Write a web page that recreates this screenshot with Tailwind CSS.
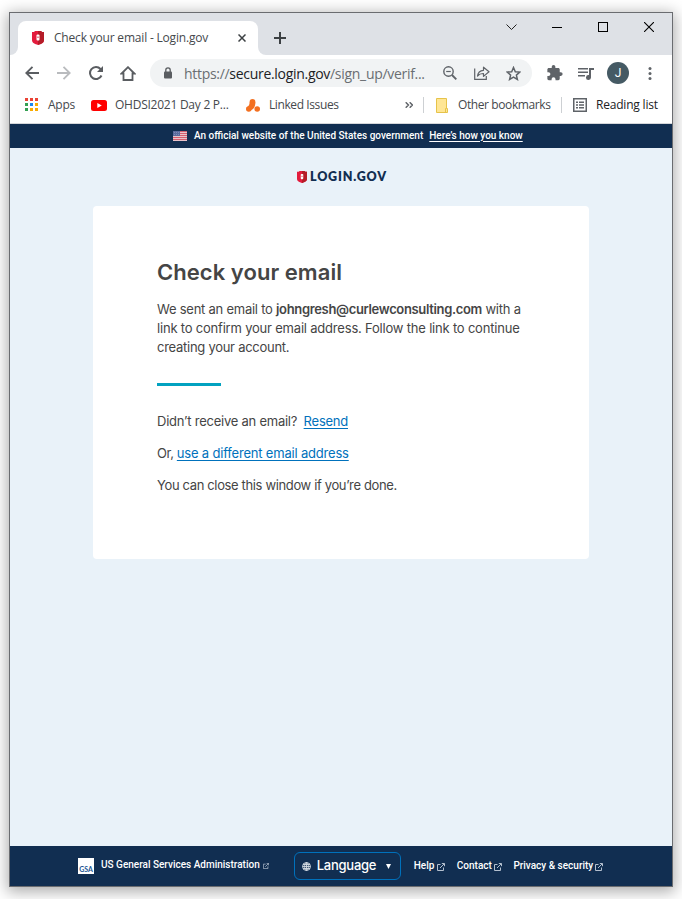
<!DOCTYPE html>
<html lang="en">
<head>
<meta charset="utf-8">
<title>Check your email - Login.gov</title>
<script src="https://cdn.jsdelivr.net/npm/@tailwindcss/browser@4"></script>
</head>
<body class="h-[899px] overflow-hidden bg-white pt-[12px] pl-[9px]">
<svg class="hidden">
  <symbol id="shield" viewBox="0 0 12 14"><path d="M0 1h2L3 0h6l1 1h2v8c0 3-3 4-6 5C3 13 0 12 0 9z" fill="#e31c3d"/><path d="M6 0h3l1 1h2v8c0 3-3 4-6 5z" fill="#b51d28"/><rect x="4.500" y="3.500" width="3" height="6" rx="1" fill="#fff"/><path d="M5.500 5.500h1V7h-1z" fill="#d8203a"/></symbol>
  <symbol id="ext" viewBox="0 0 8 8"><path d="M3.500 1.500h-3v6h6v-3M4.800.5h2.700v2.700M7.300.7 3 5" fill="none" stroke="#b4c0cf" stroke-width="1"/></symbol>
</svg>
<div class="flex h-[875px] w-[664px] flex-col border border-[#6a6c70] bg-white shadow-[0_3px_14px_2px_rgba(0,0,0,0.32)]">

  <!-- Tab strip -->
  <div class="flex h-[42px] shrink-0 bg-[#dee1e6]">
    <div class="flex w-[8px] items-end bg-white"><div class="h-full w-full rounded-br-[8px] bg-[#dee1e6]"></div></div>
    <div class="mt-[8px] flex h-[34px] w-[240px] shrink-0 items-center rounded-t-[8px] bg-white pl-[14px]">
      <svg class="h-[14px] w-[12px]"><use href="#shield"/></svg>
      <span class="ml-[10px] w-[172px] font-['Open_Sans'] text-[12px] tracking-[-0.19px] whitespace-nowrap text-[#45494d]">Check your email - Login.gov</span>
      <svg class="ml-[12px] size-[8px] shrink-0" viewBox="0 0 8 8"><path d="m.5.5 7 7m0-7-7 7" stroke="#3c4043" stroke-width="1.500"/></svg>
    </div>
    <div class="flex w-[8px] bg-white"><div class="h-full w-full rounded-bl-[8px] bg-[#dee1e6]"></div></div>
    <svg class="mt-[19px] ml-[8px] size-[12px] shrink-0" viewBox="0 0 12 12"><path d="M6 0v12M0 6h12" stroke="#3c4043" stroke-width="2"/></svg>
    <div class="mt-[9px] ml-[220px] flex h-[10px] items-center">
      <svg class="h-[6px] w-[11px]" viewBox="0 0 11 6"><path d="m.5.5 5 5 5-5" fill="none" stroke="#222" stroke-width="1"/></svg>
      <div class="ml-[35px] h-px w-[10px] bg-black"></div>
      <div class="ml-[36px] size-[10px] border border-black"></div>
      <svg class="ml-[36px] size-[10px]" viewBox="0 0 10 10"><path d="m0 0 10 10M10 0 0 10" stroke="#000" stroke-width="1.100"/></svg>
    </div>
  </div>

  <!-- Toolbar -->
  <div class="flex h-[36px] shrink-0 items-center pl-[15px]">
    <svg class="size-[14px]" viewBox="0 0 14 14"><path d="M14 7H1.500M7.500.8 1.300 7l6.200 6.200" fill="none" stroke="#5a5d61" stroke-width="1.900"/></svg>
    <svg class="ml-[18px] size-[14px]" viewBox="0 0 14 14"><path d="M0 7h12.500M6.500.8 12.700 7l-6.200 6.200" fill="none" stroke="#b9bbbe" stroke-width="1.800"/></svg>
    <svg class="ml-[18px] size-[14px]" viewBox="0 0 14 14"><path d="M12.500 9.500A6 6 0 1 1 11.500 3L12.500 4.200" fill="none" stroke="#5a5d61" stroke-width="2"/><path d="M14 0v6H8z" fill="#5a5d61"/></svg>
    <svg class="ml-[17px] h-[15px] w-[16px]" viewBox="0 0 16 15"><path d="M8 1.200 1.600 7.500H3.500v6.500h9V7.500h1.900z" fill="none" stroke="#5a5d61" stroke-width="1.800"/></svg>
    <div class="ml-[14px] flex h-[28px] w-[382px] shrink-0 items-center rounded-full bg-[#f1f3f4] pl-[14px]">
      <svg class="h-[12px] w-[8px]" viewBox="0 0 8 12"><path d="M1.800 5V3a2.200 2.200 0 0 1 4.400 0v2" fill="none" stroke="#5a5d61" stroke-width="1.300"/><rect y="4.500" width="8" height="7" rx="1" fill="#5a5d61"/></svg>
      <span class="ml-[12px] w-[259px] font-['Open_Sans'] text-[14px] tracking-[-0.3px] whitespace-nowrap text-[#6a6e72]">https://<span class="text-[#202124]">secure.login.gov</span>/sign_up/verif...</span>
      <svg class="size-[14px]" viewBox="0 0 14 14" fill="none" stroke="#5f6368"><circle cx="5.500" cy="5.500" r="4.700" stroke-width="1.400"/><path d="m9 9 4.300 4.300" stroke-width="1.900"/><path d="M3.200 5.500h4.600" stroke-width="1.200"/></svg>
      <svg class="ml-[17px] h-[14px] w-[16px]" viewBox="0 0 16 14" fill="none" stroke="#5f6368" stroke-width="1.200"><path d="M.7 2.500v10.800h11.600V10"/><path d="M3.500 10c.4-3.500 2.500-5.500 6-5.700V1.200L15 5.800l-5.500 4.600V7.500C7 7.400 5 8.200 3.500 10z" stroke-linejoin="round"/></svg>
      <svg class="ml-[16px] size-[15px]" viewBox="0 0 15 15"><path d="m7.500 1.500 1.800 4.200 4.500.4-3.400 3 1 4.400-3.900-2.300-3.900 2.300 1-4.400-3.400-3 4.500-.4z" fill="none" stroke="#5f6368" stroke-width="1.500"/></svg>
    </div>
    <svg class="ml-[15px] size-[16px] shrink-0" viewBox="1.500 1 22 22"><path d="M20.500 11H19V7c0-1.100-.9-2-2-2h-4V3.500a2.500 2.500 0 0 0-5 0V5H4c-1.100 0-2 .9-2 2v3.800h1.500a2.700 2.700 0 0 1 0 5.400H2V20c0 1.100.9 2 2 2h3.800v-1.500a2.700 2.700 0 0 1 5.400 0V22H17c1.100 0 2-.9 2-2v-4h1.500a2.500 2.500 0 0 0 0-5z" fill="#5f6368"/></svg>
    <svg class="ml-[15px] h-[13px] w-[16px] shrink-0" viewBox="0 0 16 13" fill="#5f6368"><path d="M0 1h10v1.500H0zM0 4.500h10V6H0zM0 8h7v1.500H0zM11 1h5v2h-3v7.300A2.500 2.500 0 1 1 11 8z"/></svg>
    <div class="ml-[13px] flex size-[22px] shrink-0 items-center justify-center rounded-full bg-[#455a64] font-['Roboto'] text-[12px] text-white">J</div>
    <svg class="ml-[19px] h-[13px] w-[4px] shrink-0" viewBox="0 0 4 13" fill="#5f6368"><circle cx="2" cy="1.600" r="1.500"/><circle cx="2" cy="6.500" r="1.500"/><circle cx="2" cy="11.400" r="1.500"/></svg>
  </div>

  <!-- Bookmarks bar -->
  <div class="flex h-[33px] shrink-0 items-center border-b border-[#d5d7da] pb-[4px] pl-[15px] font-['Open_Sans'] text-[12px] whitespace-nowrap text-[#45494d]">
    <svg class="mt-[-1px] size-[13px] shrink-0" viewBox="0 0 13 13"><path d="M0 0h3v3H0zM5 0h3v3H5zM10 0h3v3h-3z" fill="#ea4335"/><path d="M0 5h3v3H0zM0 10h3v3H0z" fill="#34a053"/><path d="M5 5h3v3H5z" fill="#1a88f0"/><path d="M10 5h3v3h-3zM5 10h3v3H5zM10 10h3v3h-3z" fill="#f9ab00"/></svg>
    <span class="ml-[10px] w-[43px] tracking-[-0.25px]">Apps</span>
    <svg class="h-[11px] w-[16px] shrink-0" viewBox="0 0 16 11"><rect width="16" height="11" rx="2.500" fill="#f00"/><path d="M6.300 3v5l4.500-2.500z" fill="#fff"/></svg>
    <span class="ml-[8px] w-[131px] tracking-[-0.25px]">OHDSI2021 Day 2 P...</span>
    <svg class="h-[13px] w-[14px] shrink-0" viewBox="0 0 14 13" fill="#f37021"><circle cx="6.500" cy="3" r="2.900"/><circle cx="2.800" cy="10" r="2.800"/><circle cx="11.200" cy="10" r="2.800"/><path d="M3.700 3.200h5.600C9.500 7 8 10 5.300 11L.5 8.400C2.700 7.200 3.700 5.500 3.700 3.200z"/></svg>
    <span class="ml-[9px] w-[136px] tracking-[-0.4px]">Linked Issues</span>
    <svg class="h-[6px] w-[8px] shrink-0" viewBox="0 0 8 6"><path d="m.7.3 2.700 2.700L.7 5.700M4.700.3 7.400 3 4.700 5.700" fill="none" stroke="#5f6368" stroke-width="1.500"/></svg>
    <div class="ml-[10px] h-[16px] w-px bg-[#cdd0d3]"></div>
    <svg class="ml-[12px] h-[15px] w-[12px] shrink-0" viewBox="0 0 12 15"><path d="M.5.5h10v10h1v4H.5z" fill="#ffe694" stroke="#e6c34a"/><path d="M9.500 14v-3.500h1" fill="none" stroke="#e6c34a"/></svg>
    <span class="ml-[10px] w-[103px] tracking-[-0.4px]">Other bookmarks</span>
    <div class="h-[16px] w-px bg-[#cdd0d3]"></div>
    <svg class="ml-[11px] size-[14px] shrink-0" viewBox="0 0 14 14"><rect x=".75" y=".75" width="12.500" height="12.500" fill="none" stroke="#5f6368" stroke-width="1.500"/><path d="M3 3.500h2v1.500H3zM6 3.500h5v1.500H6zM3 6.300h2v1.500H3zM6 6.300h5v1.500H6zM3 9.100h2v1.500H3zM6 9.100h5v1.500H6z" fill="#5f6368"/></svg>
    <span class="ml-[9px] tracking-[-0.2px] text-[#202124]">Reading list</span>
  </div>

  <!-- Government banner -->
  <div class="flex h-[24px] shrink-0 items-center bg-[#112e51] pl-[163px] font-['Roboto'] text-[10px] font-medium whitespace-nowrap text-white">
    <svg class="h-[10px] w-[14px]" viewBox="0 0 14 10"><path fill="#e9c3ca" d="M0 0h14v10H0z"/><path d="M0 .5h14M0 2.500h14M0 4.500h14M0 6.500h14M0 8.500h14" stroke="#d5606f"/><path fill="#5a6a9c" d="M0 0h7v5H0z"/><path d="M1 1.500h5M1 3.500h5" stroke="#8f9abf" stroke-dasharray="1 1" stroke-width=".7"/></svg>
    <span class="mt-[-2px] ml-[7px]">An official website of the United States government</span>
    <span class="mt-[-2px] ml-[6px] underline underline-offset-[1.500px]">Here’s how you know</span>
  </div>

  <!-- Page -->
  <main class="flex min-h-0 flex-1 flex-col items-center bg-[#e9f2f9] font-['Inter'] text-[13px] text-[#454545]">
    <div class="flex h-[58px] w-full shrink-0 items-center pl-[287px]">
      <svg class="h-[12px] w-[10px]" viewBox="0 0 12 14" preserveAspectRatio="none"><use href="#shield" width="12" height="14"/></svg>
      <span class="ml-[3px] font-['Lato'] text-[12.500px] leading-[14px] font-extrabold tracking-[0.8px] text-[#112e51]">LOGIN.GOV</span>
    </div>
    <section class="h-[353px] w-[496px] shrink-0 rounded-[4px] bg-white px-[64px] pt-[50px]">
      <h1 class="text-[22px] leading-[32px] font-semibold tracking-[0.05px] whitespace-nowrap">Check your email</h1>
      <p class="mt-[12px] leading-[19px] tracking-[-0.2px] whitespace-nowrap"><span class="tracking-[-0.24px]">We sent an email to </span><b class="font-semibold tracking-[-0.34px]">johngresh@curlewconsulting.com</b> with a<br>link to confirm your email address. Follow the link to continue<br><span class="tracking-[-0.27px]">creating your account.</span></p>
      <div class="mt-[26px] h-[3px] w-[64px] bg-[#02a2c0]"></div>
      <p class="mt-[26px] leading-[19px] tracking-[-0.24px]">Didn’t receive an email? <a class="ml-[3px] text-[#0071bc] underline underline-offset-2">Resend</a></p>
      <p class="mt-[13px] leading-[19px] tracking-[-0.19px]"><span class="tracking-[-0.4px]">Or, </span><a class="text-[#0071bc] underline underline-offset-2">use a different email address</a></p>
      <p class="mt-[13px] leading-[19px] tracking-[-0.36px]">You can close this window if you’re done.</p>
    </section>
  </main>

  <!-- Footer -->
  <footer class="flex h-[40px] shrink-0 items-center bg-[#112e51] pl-[68px] font-['Roboto'] text-[10px] font-medium whitespace-nowrap text-white">
    <div class="flex size-[16px] items-end justify-center bg-white font-['Lato'] text-[7px] leading-[9px] font-bold text-[#205493]">GSA</div>
    <span class="mt-[-3px] ml-[7px]">US General Services Administration</span>
    <svg class="ml-[3px] size-[6px]" viewBox="0 0 8 8"><use href="#ext" width="8" height="8"/></svg>
    <div class="ml-[25px] flex h-[28px] w-[107px] items-center rounded-[6px] border border-[#0071bc] pl-[7px]">
      <svg class="size-[9px]" viewBox="0 0 9 9" fill="none" stroke="#d5dbe3" stroke-width=".9"><circle cx="4.500" cy="4.500" r="4"/><ellipse cx="4.500" cy="4.500" rx="1.900" ry="4"/><path d="M4.500.5v8M.5 4.500h8M1 2.500h7M1 6.500h7"/></svg>
      <span class="ml-[6px] w-[60px] font-['Inter'] text-[13px] font-medium tracking-[-0.25px]">Language</span>
      <svg class="ml-[9px] size-[5px]" viewBox="0 0 5 5"><path d="M0 0h5L2.500 5z" fill="#fff"/></svg>
    </div>
    <span class="mt-[-1px] ml-[13px]">Help</span>
    <svg class="mt-[2px] ml-[3px] size-[8px]"><use href="#ext"/></svg>
    <span class="mt-[-1px] ml-[11.500px]">Contact</span>
    <svg class="mt-[2px] ml-[2px] size-[8px]"><use href="#ext"/></svg>
    <span class="mt-[-1px] ml-[11.500px]">Privacy &amp; security</span>
    <svg class="mt-[2px] ml-[2px] size-[8px]"><use href="#ext"/></svg>
  </footer>
</div>
</body>
</html>
